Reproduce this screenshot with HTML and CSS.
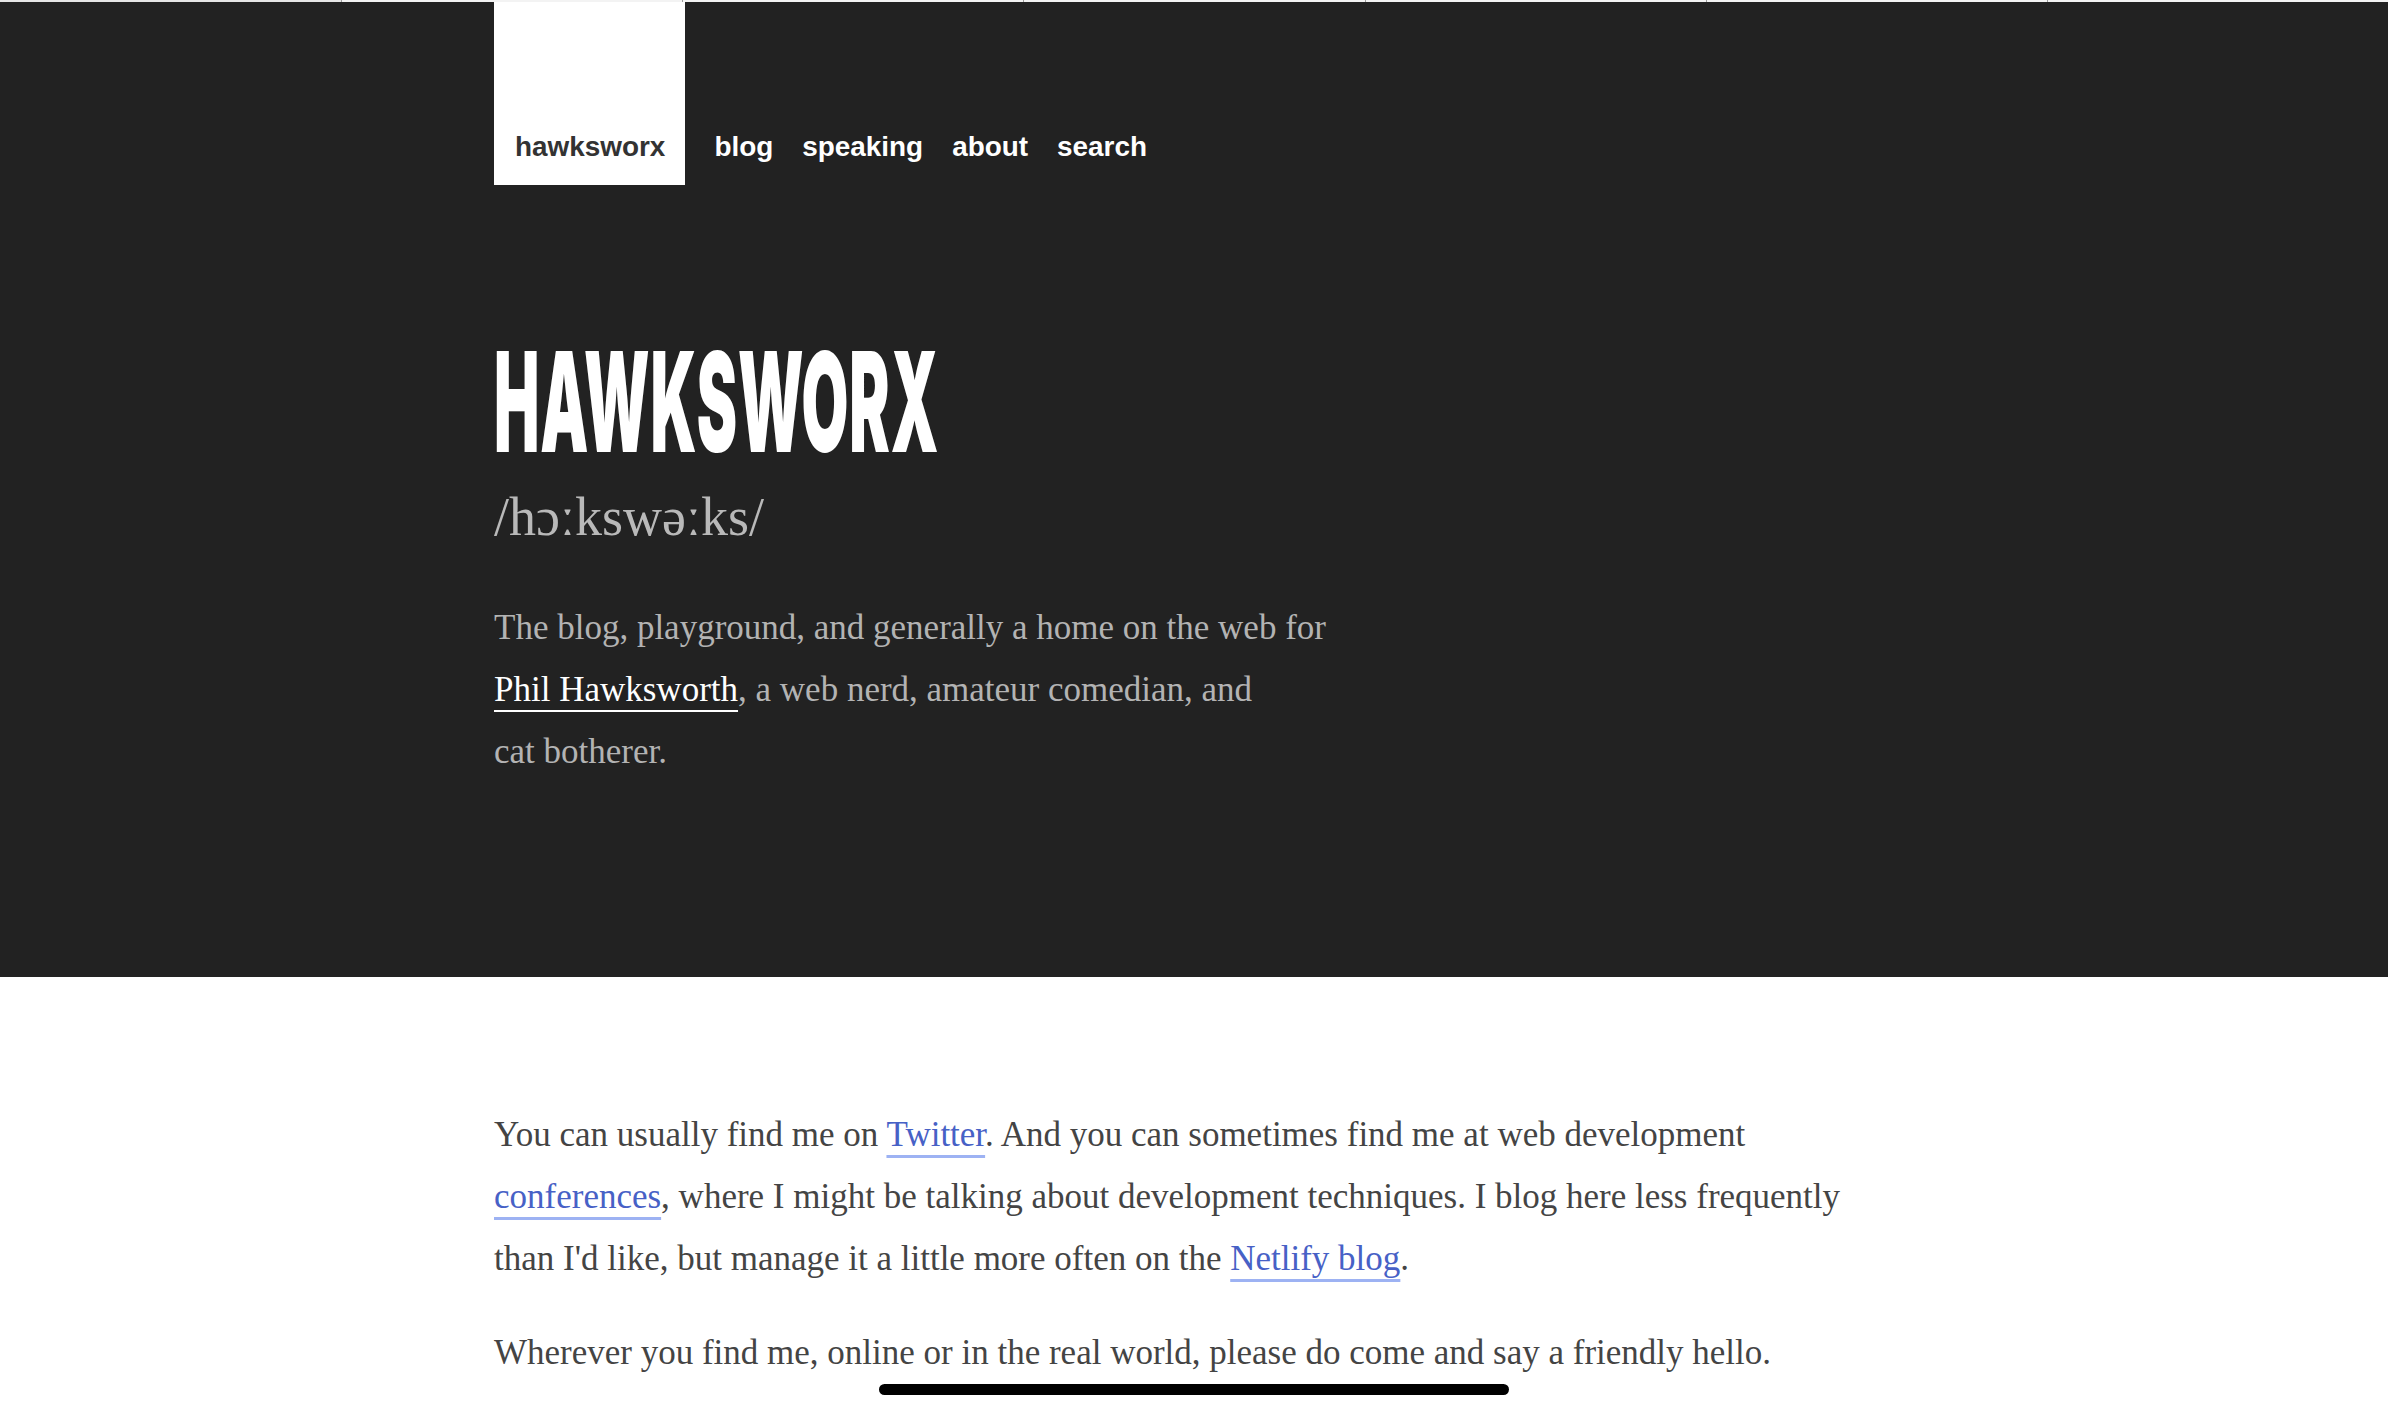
FILE: index.html
```html
<!DOCTYPE html>
<html lang="en">
<head>
<meta charset="utf-8">
<title>Hawksworx</title>
<link rel="stylesheet" href="styles.css">
</head>
<body>
<div class="tabstrip">
  <span class="tab tab-active"></span><span class="tab"></span><span class="tab"></span><span class="tab"></span><span class="tab"></span><span class="tab"></span><span class="tab"></span>
</div>
<header class="hero">
  <div class="wrap">
    <nav class="nav">
      <a class="brand" href="#">hawksworx</a>
      <a class="nav-link" href="#">blog</a>
      <a class="nav-link" href="#">speaking</a>
      <a class="nav-link" href="#">about</a>
      <a class="nav-link" href="#">search</a>
    </nav>
    <h1 class="title"><span class="title-text">HAWKSWORX</span></h1>
    <p class="phon">/hɔːkswəːks/</p>
    <p class="intro">The blog, playground, and generally a home on the web for <a class="intro-link" href="#">Phil Hawksworth</a>, a web nerd, amateur comedian, and <span class="nowrap">cat botherer.</span></p>
  </div>
</header>
<main class="content">
  <div class="wrap">
    <p class="body-text">You can usually find me on <a class="body-link" href="#">Twitter</a>. And you can sometimes find me at web development <a class="body-link" href="#">conferences</a>, where I might be talking about development techniques. I blog here less frequently than I'd like, but manage it a little more often on the <a class="body-link" href="#">Netlify blog</a>.</p>
    <p class="body-text">Wherever you find me, online or in the real world, please do come and say a friendly hello.</p>
  </div>
</main>
<div class="home-indicator"></div>
</body>
</html>
```

FILE: styles.css
```css
html, body {
  margin: 0;
  padding: 0;
}

body {
  background: #ffffff;
  font-family: "Liberation Serif", "Times New Roman", serif;
  overflow: hidden;
}

.tabstrip {
  display: grid;
  grid-template-columns: repeat(7, 1fr);
  height: 2px;
  background: #f3f3f3;
}

.tab + .tab {
  border-left: 1px solid #9a9a9a;
}

.tab-active {
  background: #e6e6e6;
}

.hero {
  background: #222222;
  padding-bottom: 194px;
}

.wrap {
  max-width: 1400px;
  margin: 0 auto;
}

.nav {
  display: flex;
  align-items: flex-end;
  gap: 29px;
  font-family: "Liberation Sans", Arial, sans-serif;
  font-weight: 700;
  font-size: 27.9px;
  line-height: normal;
}

.brand {
  display: flex;
  align-items: flex-end;
  height: 183px;
  box-sizing: border-box;
  padding: 0 20px 22px 21px;
  background: #ffffff;
  color: #333333;
  text-decoration: none;
}

.nav-link {
  color: #ffffff;
  text-decoration: none;
  padding-bottom: 22px;
}

.title {
  margin: 147px 0 0;
  font-family: "Inter", "Liberation Sans", sans-serif;
  font-weight: 900;
  font-size: 139px;
  line-height: 139px;
  color: #ffffff;
  white-space: nowrap;
}

.title-text {
  display: inline-block;
  transform: scaleX(0.4355);
  transform-origin: left center;
  letter-spacing: 2px;
}

.phon {
  margin: 16px 0 0;
  font-size: 54px;
  line-height: 60px;
  color: #b9b9b9;
}

.intro {
  margin: 50px 0 0;
  max-width: 880px;
  font-size: 35px;
  line-height: 62px;
  color: #b3b3b3;
}

.nowrap {
  white-space: nowrap;
}

.intro-link {
  color: #ffffff;
  text-decoration: underline;
  text-decoration-thickness: 2px;
  text-underline-offset: 9px;
}

.content {
  padding-top: 127px;
}

.body-text {
  margin: 0 0 32px;
  font-size: 35px;
  line-height: 62px;
  color: #444444;
}

.body-link {
  color: #4761c6;
  text-decoration: underline;
  text-decoration-color: #9db2f3;
  text-decoration-thickness: 3px;
  text-underline-offset: 9px;
}

.home-indicator {
  position: fixed;
  left: 50%;
  bottom: 15px;
  width: 630px;
  height: 11px;
  margin-left: -315px;
  border-radius: 6px;
  background: #000000;
}
```
